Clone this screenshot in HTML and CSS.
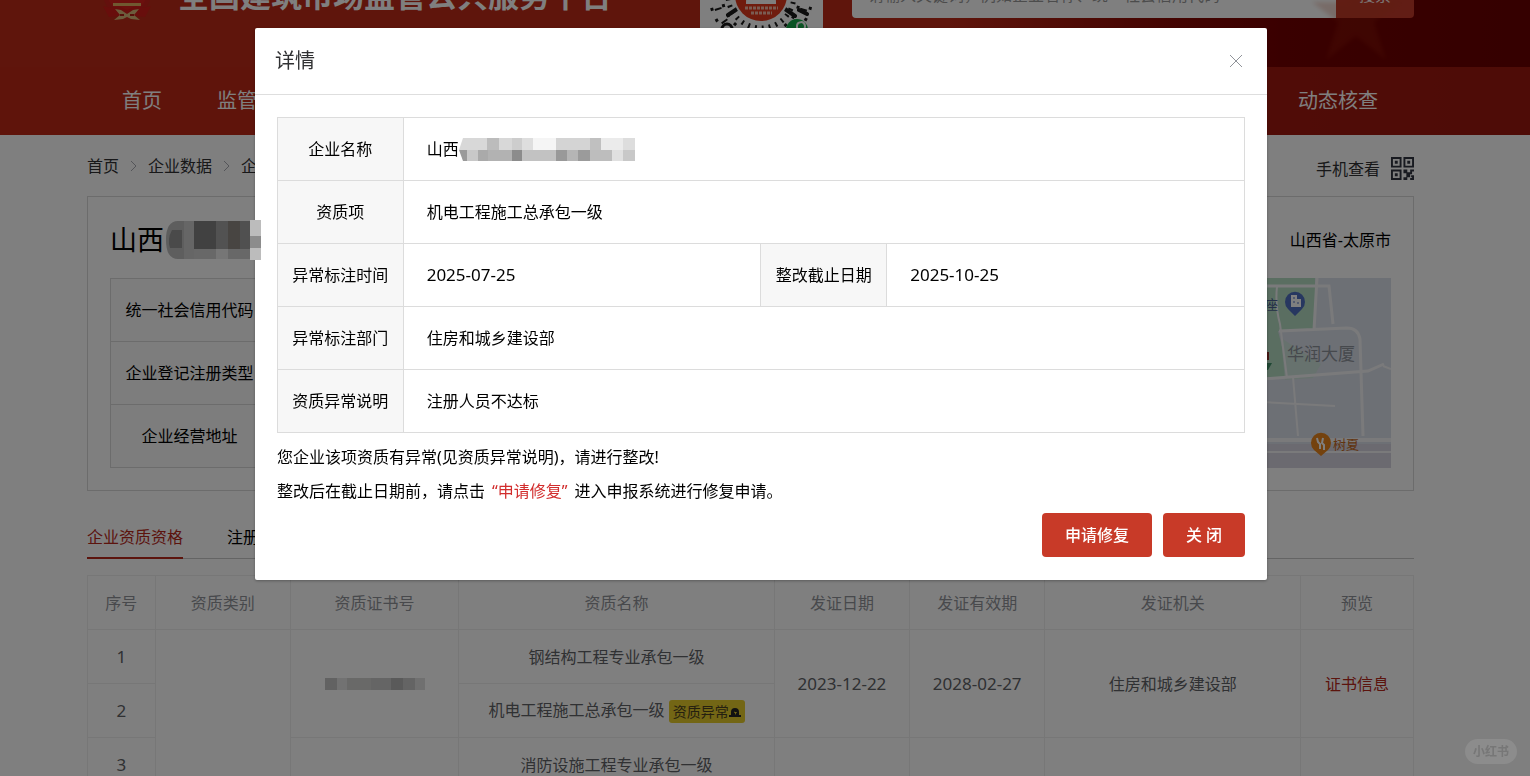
FILE: index.html
```html
<!DOCTYPE html>
<html lang="zh-CN">
<head>
  <meta charset="UTF-8">
  <title>全国建筑市场监管公共服务平台</title>
  <link rel="stylesheet" href="styles.css">
</head>
<body>
  <div class="page">
    <header class="header">
      <div class="container masthead">
        <svg class="emblem" viewBox="0 0 54 54" aria-hidden="true">
          <circle cx="27" cy="25" r="24" fill="#c8201a"/>
          <circle cx="27" cy="24" r="20" fill="#d8201c"/>
          <path d="M27 9l2 6h6l-5 4 2 6-5-4-5 4 2-6-5-4h6z" fill="#f0c060"/>
          <path d="M13 35h28v3H13z" fill="#e0b060"/>
          <path d="M3 38q10 3 15 0l9 4 9-4q5 3 15 0l-6 11-9-1-9 2-9-2-9 1z" fill="#d01c18"/>
          <path d="M15 41l6 1 6 4 6-4 6-1-5 6 6 5-9-1-4-2-4 2-9 1 6-5z" fill="#d8b878"/>
          <path d="M20 47h4M30 47h4" stroke="#b01c14" stroke-width="2"/>
        </svg>
        <strong class="site-name">全国建筑市场监管公共服务平台</strong>
        <svg class="mini-code" viewBox="0 0 123 123" aria-hidden="true">
          <rect width="123" height="123" fill="#fff"/>
          <g fill="none" stroke="#1a1a1a">
            <circle cx="61" cy="61" r="33" stroke-width="5" stroke-dasharray="2 5"/>
            <circle cx="61" cy="61" r="39" stroke-width="3" stroke-dasharray="3 8"/>
            <circle cx="61" cy="61" r="45" stroke-width="7" stroke-dasharray="2 12"/>
            <circle cx="61" cy="61" r="51" stroke-width="3" stroke-dasharray="3 9"/>
            <path d="M37 75l-9 6M85 75l10 7M99 76l8 4" stroke-width="4" stroke-linecap="round"/>
          </g>
          <circle cx="61" cy="61" r="28" fill="#fff"/>
          <circle cx="61" cy="61" r="26" fill="#e0381c"/>
          <path d="M46 68q0-7 6-7h18q6 0 6 7v2H46z" fill="#fff"/>
          <path d="M45 74h33M51 79h21" stroke="#f4b8a4" stroke-width="3" stroke-dasharray="3 1"/>
          <circle cx="27" cy="95" r="5" fill="#fff" stroke="#1a1a1a" stroke-width="3"/>
          <circle cx="97" cy="96" r="11" fill="#15a848"/>
          <path d="M97 95v-3a4 4 0 1 1 5 4" fill="none" stroke="#fff" stroke-width="2"/>
        </svg>
        <form class="search">
          <input type="text" aria-label="关键词" placeholder="请输入关键词，例如企业名称、统一社会信用代码">
          <button type="button">搜索</button>
        </form>
      </div>
      <svg class="star" viewBox="0 0 100 100" aria-hidden="true">
        <path d="M50 4l10 34h34L68 58l12 38-30-24-30 24 12-38L6 38h34z"/>
      </svg>
      <nav class="nav">
        <div class="container nav-inner">
          <a href="#">首页</a>
          <a href="#">监管动态</a>
          <a class="last" href="#">动态核查</a>
        </div>
      </nav>
    </header>

    <main class="container">
      <div class="toolbar">
        <nav class="crumbs" aria-label="面包屑">
          <a href="#">首页</a>
          <svg viewBox="0 0 7 12"><path d="M1 1l5 5-5 5"/></svg>
          <a href="#">企业数据</a>
          <svg viewBox="0 0 7 12"><path d="M1 1l5 5-5 5"/></svg>
          <span>企业详情</span>
        </nav>
        <a class="mobile" href="#">手机查看
          <svg viewBox="0 0 24 24" aria-hidden="true">
            <path fill-rule="evenodd" d="M0 0h11v11H0zM2 2v7h7V2zM4 4h3v3H4zM13 0h11v11H13zM15 2v7h7V2zM17 4h3v3h-3zM0 13h11v11H0zM2 15v7h7v-7zM4 17h3v3H4zM13 13h4v3h3v5h-3v3h-4v-3h3v-4h-3zM20 13h4v2h-2v3h-2zM21 19h3v5h-4v-2h2v-1h-1z"/>
          </svg>
        </a>
      </div>

      <section class="company">
        <div class="company-head">
          <h1>山西</h1>
          <svg class="name-mask" viewBox="0 0 97 40" aria-hidden="true">
            <path d="M14 1h13v38H14Q2 39 2 20T14 1z" fill="#5e5e5e"/>
            <path d="M8 10h10v18H6q-3-9 2-18z" fill="#4a4a4a"/>
            <path d="M20 1h10v38H20z" fill="#666"/>
            <path d="M30 1h22v28H30z" fill="#414141"/>
            <path d="M52 1h12v28H52z" fill="#525252"/>
            <path d="M64 1h12v28H64z" fill="#484542"/>
            <path d="M76 1h10v28H76z" fill="#505050"/>
            <path d="M30 29h56v10H30z" fill="#686868"/>
            <path d="M52 29h12v10H52z" fill="#767676"/>
            <path d="M86 0h11v40H86z" fill="#bcbcbc"/>
            <path d="M86 16h11v12H86z" fill="#8c8c8c"/>
          </svg>
          <span class="region">山西省-太原市</span>
        </div>
        <div class="company-body">
          <table class="info">
            <tr><th scope="row">统一社会信用代码</th><td></td></tr>
            <tr><th scope="row">企业登记注册类型</th><td></td></tr>
            <tr><th scope="row">企业经营地址</th><td></td></tr>
          </table>
          <svg class="map" viewBox="0 0 300 190" role="img" aria-label="地图">
            <rect width="300" height="190" fill="#dbe0ea"/>
            <path d="M0 0h224v51l-37 2 12 47-99 4H0z" fill="#b4dcc2"/>
            <path d="M190 60l40 26-8 14-28 2z" fill="#cfe4dc"/>
            <path d="M0 166h300v24H0z" fill="#d6d4e0"/>
            <g fill="none" stroke="#f4f5f7" stroke-width="3">
              <path d="M0 8h238l4 38M226 0l-3 52M188 53l68-3q11 0 13 11l3 97M0 106l172-5 105-8 16-7"/>
              <path d="M186 8q-2 20 3 38l7 54M202 99l5 59M0 124h172l72 4M292 88l8 3" stroke-width="2"/>
              <path d="M0 162h300" stroke-width="4"/>
              <path d="M0 174h300" stroke-width="2"/>
            </g>
            <path d="M204 38l-7-7a10 10 0 1 1 14 0z" fill="#4f6fc0"/>
            <path d="M200 17h6v4h4v8h-10z" fill="#fff"/>
            <path d="M202 20h2M202 24h2M206 25h2" stroke="#4f6fc0"/>
            <text class="poi" x="174" y="31">座</text>
            <text class="poi-area" x="196" y="82">华润大厦</text>
            <path d="M170 74h8v8h-8z" fill="#8c3028"/>
            <path d="M170 85h11l-4 7h-7z" fill="#3f8f68"/>
            <path d="M230 178l-7-6a10 10 0 1 1 14 0z" fill="#e8841c"/>
            <path d="M226 160l1 4 2 2v5M232 160l-1 5 2 2v5" fill="none" stroke="#fff" stroke-width="2"/>
            <text class="poi-food" x="242" y="171">树夏</text>
          </svg>
        </div>
      </section>

      <nav class="tabs">
        <a class="active" href="#">企业资质资格</a>
        <a href="#">注册人员</a>
      </nav>

      <table class="certs">
        <colgroup>
          <col class="c-no"><col class="c-date"><col class="c-cert"><col class="c-name">
          <col class="c-date"><col class="c-date"><col class="c-org"><col>
        </colgroup>
        <thead>
          <tr>
            <th>序号</th><th>资质类别</th><th>资质证书号</th><th>资质名称</th>
            <th>发证日期</th><th>发证有效期</th><th>发证机关</th><th>预览</th>
          </tr>
        </thead>
        <tbody>
          <tr>
            <td class="num">1</td>
            <td rowspan="3"></td>
            <td rowspan="2">
              <svg class="cert-mask" viewBox="0 0 100 12" aria-hidden="true">
                <path d="M0 0h12v12H0z" fill="#c4c4c4"/>
                <path d="M12 0h10v12H12z" fill="#e4e4e4"/>
                <path d="M22 0h24v12H22z" fill="#d2d2d0"/>
                <path d="M46 0h20v12H46z" fill="#cacaca"/>
                <path d="M66 0h12v12H66z" fill="#b4b4b4"/>
                <path d="M78 0h12v12H78z" fill="#c8c8c8"/>
                <path d="M90 0h10v12H90z" fill="#e0e0e0"/>
              </svg>
            </td>
            <td>钢结构工程专业承包一级</td>
            <td class="num" rowspan="2">2023-12-22</td>
            <td class="num" rowspan="2">2028-02-27</td>
            <td rowspan="2">住房和城乡建设部</td>
            <td rowspan="2"><a class="cert-link" href="#">证书信息</a></td>
          </tr>
          <tr>
            <td class="num">2</td>
            <td>机电工程施工总承包一级
              <span class="warn">资质异常<svg viewBox="0 0 12 12" aria-hidden="true"><path fill-rule="evenodd" d="M2 9V6a4 4 0 0 1 8 0v3h2v2H0V9zM6 5L5 7h1v2l2-3H6z"/></svg></span>
            </td>
          </tr>
          <tr>
            <td class="num">3</td>
            <td></td>
            <td>消防设施工程专业承包一级</td>
            <td></td><td></td><td></td><td></td>
          </tr>
        </tbody>
      </table>
    </main>
  </div>

  <div class="overlay">
    <div class="dialog" role="dialog" aria-modal="true" aria-labelledby="dialog-title">
      <div class="dialog-head">
        <h2 id="dialog-title">详情</h2>
        <button class="close" type="button" aria-label="关闭">
          <svg viewBox="0 0 12 12"><path d="M0 0l12 12M12 0L0 12"/></svg>
        </button>
      </div>
      <div class="dialog-body">
        <table class="detail">
          <colgroup><col class="d-label"><col class="d-value"><col class="d-label"><col></colgroup>
          <tr>
            <th scope="row">企业名称</th>
            <td colspan="3">
              <div class="masked">山西
                <svg viewBox="0 0 176 23" aria-hidden="true">
                  <path d="M4 0h24v12H0z" fill="#d8d8d8"/>
                  <path d="M28 0h12v12H28z" fill="#bcbcbc"/>
                  <path d="M40 0h13v12H40z" fill="#d8d8d8"/>
                  <path d="M53 0h10v12H53z" fill="#cdcdcd"/>
                  <path d="M63 0h11v12H63z" fill="#dedede"/>
                  <path d="M74 0h23v12H74z" fill="#f5f5f5"/>
                  <path d="M97 0h34v12H97z" fill="#d4d4d4"/>
                  <path d="M131 0h11v12h-11z" fill="#c0c0c0"/>
                  <path d="M142 0h22v12h-22z" fill="#ebebeb"/>
                  <path d="M164 0h12v12h-12z" fill="#ddd"/>
                  <path d="M0 12h8v11H4z" fill="#9a9a9a"/>
                  <path d="M8 12h11v11H8z" fill="#c8c8c8"/>
                  <path d="M19 12h10v11H19z" fill="#aaa"/>
                  <path d="M29 12h24v11H29z" fill="#b2b2b2"/>
                  <path d="M53 12h10v11H53z" fill="#8c8c8c"/>
                  <path d="M63 12h34v11H63z" fill="#c2c2c2"/>
                  <path d="M97 12h11v11H97z" fill="#999"/>
                  <path d="M108 12h11v11h-11z" fill="#b5b5b5"/>
                  <path d="M119 12h12v11h-12z" fill="#9b9b9b"/>
                  <path d="M131 12h22v11h-22z" fill="#bdbdbd"/>
                  <path d="M153 12h11v11h-11z" fill="#e0e0e0"/>
                  <path d="M164 12h12v11h-12z" fill="#c8c8c8"/>
                </svg>
              </div>
            </td>
          </tr>
          <tr><th scope="row">资质项</th><td colspan="3">机电工程施工总承包一级</td></tr>
          <tr>
            <th scope="row">异常标注时间</th><td class="num">2025-07-25</td>
            <th scope="row">整改截止日期</th><td class="num">2025-10-25</td>
          </tr>
          <tr><th scope="row">异常标注部门</th><td colspan="3">住房和城乡建设部</td></tr>
          <tr><th scope="row">资质异常说明</th><td colspan="3">注册人员不达标</td></tr>
        </table>
        <div class="tips">
          <p>您企业该项资质有异常(见资质异常说明)，请进行整改!</p>
          <p>整改后在截止日期前，请点击<em>“申请修复”</em>进入申报系统进行修复申请。</p>
        </div>
        <div class="actions">
          <button type="button">申请修复</button>
          <button type="button">关 闭</button>
        </div>
      </div>
    </div>
  </div>
  <div class="watermark">小红书</div>
</body>
</html>
```
FILE: styles.css
```css
* { box-sizing: border-box; }
body { margin: 0; height: 100vh; overflow: hidden; background: #fff; color: #000; font: 16px/24px "Noto Sans", "Noto Sans CJK SC", sans-serif; }
a { color: inherit; text-decoration: none; }
button, input { font: inherit; }
h1, h2, p { margin: 0; font-weight: normal; }
svg { display: block; flex: none; }
table { border-collapse: collapse; }
th { font-weight: normal; }
.num { font-size: 17px; }

/* the page stands scrolled down a little behind the dialog */
.page { margin-top: -66px; }
.container { padding: 0 116px 0 87px; }

.header { position: relative; background: linear-gradient(90deg, #be2a18 0, #be2a18 62%, #8a0a04 76%, #740000 84%, #6a0000 100%); }
.masthead { display: flex; align-items: center; height: 133px; padding-bottom: 11px; }
.emblem { width: 54px; height: 54px; margin: 0 24px 0 13px; }
.site-name { color: #fff; font-size: 31px; line-height: 40px; white-space: nowrap; }
.mini-code { width: 123px; height: 123px; margin: 0 29px 0 auto; }
.search { display: flex; width: 562px; height: 45px; }
.search input { flex: 1; min-width: 0; border: 0; border-radius: 4px 0 0 4px; padding: 0 16px; background: #fff; }
.search input::placeholder { color: #999; }
.search button { width: 78px; border: 0; padding: 0; border-radius: 0 4px 4px 0; background: #c43a2a; color: #fff; }
.star { position: absolute; right: 124px; top: 30px; width: 100px; height: 100px; fill: #b83c18; opacity: .2; filter: blur(2px); }
.nav { position: relative; background: rgba(190, 42, 24, .6); color: #fff; font-size: 20px; }
.nav-inner { display: flex; align-items: center; gap: 55px; height: 68px; padding-left: 122px; padding-right: 152px; }
.nav .last { margin-left: auto; }

.toolbar { display: flex; justify-content: space-between; align-items: center; height: 61px; color: #303133; }
.crumbs { display: flex; align-items: center; gap: 11px; }
.crumbs svg { width: 7px; height: 12px; fill: none; stroke: #a8abb2; }
.mobile { display: flex; align-items: center; gap: 11px; padding-top: 6px; }
.mobile svg { width: 23px; height: 23px; fill: #303540; }

.company { border: 1px solid #d8d8d8; padding: 0 22px 22px; }
.company-head { display: flex; align-items: center; height: 81px; padding-top: 4px; }
.company-head h1 { font-size: 27px; line-height: 40px; }
.name-mask { position: relative; z-index: 20; width: 97px; height: 40px; }
.region { margin-left: auto; }
.company-body { display: flex; gap: 24px; }
.info { flex: 1; }
.info th, .info td { height: 63px; border: 1px solid #d8d8d8; padding: 0; }
.info th { width: 158px; background: #fafafa; }
.map { width: 300px; height: 190px; }
.poi, .poi-food { font-size: 13px; }
.poi { fill: #4a5f90; }
.poi-food { fill: #c4681c; }
.poi-area { font-size: 17px; fill: #8d929b; }

.tabs { display: flex; gap: 44px; margin-top: 24px; height: 44px; border-bottom: 1px solid #c8c8c8; line-height: 44px; }
.tabs .active { height: 44px; border-bottom: 2px solid #b8281a; color: #b8281a; }

.certs { width: 100%; margin-top: 16px; table-layout: fixed; text-align: center; color: #606266; }
.certs th, .certs td { height: 54px; padding: 0; border: 1px solid #eee; }
.certs th { color: #909399; }
.c-no { width: 5.1%; }
.c-date { width: 10.2%; }
.c-cert { width: 12.7%; }
.c-name { width: 23.8%; }
.c-org { width: 19.3%; }
.cert-mask { width: 100px; height: 12px; margin: 0 auto; }
.cert-link { color: #b8281a; }
.warn { display: inline-flex; align-items: center; height: 23px; padding: 0 4px; border-radius: 3px; background: #e6cc2a; color: #4a4020; font-size: 14px; vertical-align: middle; }
.warn svg { width: 12px; height: 12px; fill: #222; }

.overlay { position: fixed; inset: 0; z-index: 10; display: flex; justify-content: center; align-items: flex-start; padding: 28px 8px 0 0; background: rgba(0, 0, 0, .5); }
.dialog { width: 66.5%; background: #fff; border-radius: 2px; box-shadow: 0 1px 3px rgba(0, 0, 0, .3); }
.dialog-head { display: flex; justify-content: space-between; align-items: center; height: 67px; padding: 0 25px 0 20px; border-bottom: 1px solid #dedede; }
.dialog-head h2 { font-size: 20px; line-height: 28px; color: #303133; }
.close { border: 0; padding: 0; background: none; }
.close svg { width: 12px; height: 12px; fill: none; stroke: #909399; }
.dialog-body { padding: 22px 22px 23px; }
.detail { width: 100%; table-layout: fixed; }
.detail th, .detail td { height: 63px; padding: 0; border: 1px solid #dcdcdc; }
.detail th { background: #f7f7f7; text-align: center; }
.detail td { padding-left: 23px; }
.d-label { width: 13%; }
.d-value { width: 37%; }
.masked { display: flex; align-items: center; }
.masked svg { width: 176px; height: 23px; }
.tips { margin-top: 7px; line-height: 34px; }
.tips em { padding: 0 7px; font-style: normal; color: #d22d2d; }
.actions { display: flex; justify-content: flex-end; gap: 11px; margin-top: 5px; }
.actions button { height: 44px; padding: 0 23px; border: 0; border-radius: 4px; background: #c83a28; color: #fff; font-weight: 500; }

.watermark { position: fixed; right: 13px; bottom: 12px; z-index: 20; padding: 0 8px; border-radius: 13px; background: rgba(255, 255, 255, .1); color: #777; font-size: 12px; font-weight: bold; line-height: 25px; }
```
